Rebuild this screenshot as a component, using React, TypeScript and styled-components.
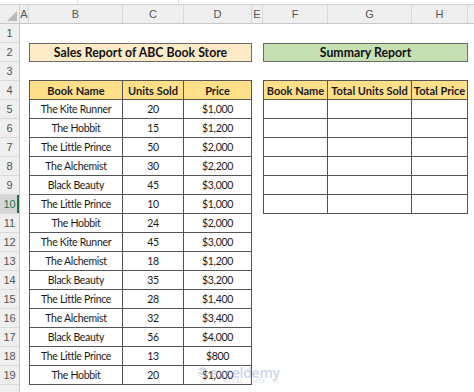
import styled, { createGlobalStyle } from 'styled-components';

// column widths A..I (the row header column is separate)
const COLS = [9, 94, 61, 68, 11, 65, 84, 56, 40];
const LETTERS = ['A', 'B', 'C', 'D', 'E', 'F', 'G', 'H', ''];
const ROW_COUNT = 19;
const SELECTED_ROW = 10;

const sales = [
    ['The Kite Runner', '20', '$1,000'],
    ['The Hobbit', '15', '$1,200'],
    ['The Little Prince', '50', '$2,000'],
    ['The Alchemist', '30', '$2,200'],
    ['Black Beauty', '45', '$3,000'],
    ['The Little Prince', '10', '$1,000'],
    ['The Hobbit', '24', '$2,000'],
    ['The Kite Runner', '45', '$3,000'],
    ['The Alchemist', '18', '$1,200'],
    ['Black Beauty', '35', '$3,200'],
    ['The Little Prince', '28', '$1,400'],
    ['The Alchemist', '32', '$3,400'],
    ['Black Beauty', '56', '$4,000'],
    ['The Little Prince', '13', '$800'],
    ['The Hobbit', '20', '$1,000'],
];

const GlobalStyle = createGlobalStyle`
    html, body {
        margin: 0;
        padding: 0;
        background: #ffffff;
        overflow: hidden;
    }
    body {
        font-family: Lato, "Open Sans", sans-serif;
    }
`;

const Window = styled.div`
    width: 474px;
    height: 392px;
    overflow: hidden;
    position: relative;
    background: #ffffff;
`;

const FormulaStrip = styled.div`
    height: 4px;
    display: flex;
    border-bottom: 1px solid #d6d6d6;
`;

const StripPart = styled.div<{ $w: number }>`
    width: ${p => p.$w}px;
    border-right: 1px solid #dcdcdc;
`;

const HeaderRow = styled.div`
    display: flex;
    height: 19px;
    background: #efefef;
    border-bottom: 1px solid #c8c8c8;
    box-sizing: border-box;
`;

const Corner = styled.div`
    width: 20px;
    flex-shrink: 0;
    position: relative;
    border-right: 1px solid #d0d0d0;
    box-sizing: border-box;
    &::after {
        content: '';
        position: absolute;
        right: 2px;
        bottom: 2px;
        border-style: solid;
        border-width: 0 0 10px 10px;
        border-color: transparent transparent #b9b9b9 transparent;
    }
`;

const ColHead = styled.div<{ $w: number }>`
    width: ${p => p.$w}px;
    flex-shrink: 0;
    box-sizing: border-box;
    border-right: 1px solid #d8d8d8;
    display: flex;
    align-items: center;
    justify-content: center;
    font-family: "Liberation Sans", Arial, sans-serif;
    font-size: 11px;
    color: #555;
`;

const Body = styled.div`
    display: flex;
`;

const RowHeads = styled.div`
    width: 20px;
    flex-shrink: 0;
    display: flex;
    flex-direction: column;
    background: #efefef;
    border-right: 1px solid #c8c8c8;
    box-sizing: border-box;
`;

const RowHead = styled.div<{ $selected?: boolean }>`
    height: 19px;
    box-sizing: border-box;
    border-bottom: 1px solid #dadada;
    display: flex;
    align-items: center;
    justify-content: center;
    font-family: "Liberation Sans", Arial, sans-serif;
    font-size: 11px;
    color: ${p => (p.$selected ? '#217346' : '#555')};
    background: ${p => (p.$selected ? '#d6d6d6' : 'transparent')};
    box-shadow: ${p => (p.$selected ? 'inset -2px 0 0 #217346' : 'none')};
`;

const Sheet = styled.div`
    display: grid;
    grid-template-columns: ${COLS.map(w => `${w}px`).join(' ')};
    grid-auto-rows: 19px;
`;

const Banner = styled.div<{ $bg: string; $col: string }>`
    grid-column: ${p => p.$col};
    grid-row: 2;
    background: ${p => p.$bg};
    border: 1px solid #6b6b6b;
    box-sizing: border-box;
    display: flex;
    align-items: center;
    justify-content: center;
    font-weight: 700;
    font-size: 12.3px;
    color: #111;
`;

const Table = styled.div<{ $col: string; $rows: string; $tpl: string }>`
    grid-column: ${p => p.$col};
    grid-row: ${p => p.$rows};
    display: grid;
    grid-template-columns: ${p => p.$tpl};
    grid-auto-rows: 19px;
    border-top: 1px solid #555;
    border-left: 1px solid #555;
    margin-top: -1px;
`;

const Cell = styled.div<{ $head?: boolean }>`
    box-sizing: border-box;
    border-right: 1px solid #555;
    border-bottom: 1px solid #555;
    display: flex;
    align-items: center;
    justify-content: center;
    white-space: nowrap;
    overflow: hidden;
    font-size: ${p => (p.$head ? '11px' : '10.5px')};
    letter-spacing: ${p => (p.$head ? '0' : '-0.3px')};
    font-weight: ${p => (p.$head ? 700 : 400)};
    background: ${p => (p.$head ? '#ffdf88' : '#ffffff')};
    color: #1a1a1a;
`;

const Watermark = styled.div`
    position: absolute;
    left: 197px;
    top: 366px;
    display: flex;
    align-items: flex-start;
    gap: 2px;
    opacity: 0.45;
    pointer-events: none;
`;

const MarkText = styled.div`
    display: flex;
    flex-direction: column;
    line-height: 1;
`;

const MarkWord = styled.span`
    font-family: "Open Sans", sans-serif;
    font-size: 14px;
    font-weight: 600;
    color: #8ea3d6;
    letter-spacing: -0.3px;
`;

const MarkTag = styled.span`
    font-family: "Liberation Sans", sans-serif;
    font-size: 4.5px;
    color: #9aa6c4;
    letter-spacing: 1px;
    margin-left: 14px;
`;

function App() {
    const rows = Array.from({ length: ROW_COUNT }, (_, i) => i + 1);
    const summaryRows = Array.from({ length: 6 }, (_, i) => i);
    return (
        <Window>
            <GlobalStyle />
            <FormulaStrip>
                <StripPart $w={77} />
                <StripPart $w={100} />
            </FormulaStrip>
            <HeaderRow>
                <Corner />
                {COLS.map((w, i) => (
                    <ColHead key={i} $w={w}>{LETTERS[i]}</ColHead>
                ))}
            </HeaderRow>
            <Body>
                <RowHeads>
                    {rows.map(r => (
                        <RowHead key={r} $selected={r === SELECTED_ROW}>{r}</RowHead>
                    ))}
                    <RowHead />
                </RowHeads>
                <Sheet>
                    <Banner $bg="#fdebc8" $col="2 / 5">Sales Report of ABC Book Store</Banner>
                    <Banner $bg="#c6e0b4" $col="6 / 9">Summary Report</Banner>
                    <Table $col="2 / 5" $rows="4 / 20" $tpl="93px 61px 68px">
                        <Cell $head>Book Name</Cell>
                        <Cell $head>Units Sold</Cell>
                        <Cell $head>Price</Cell>
                        {sales.map((row, i) =>
                            row.map((v, j) => <Cell key={`${i}-${j}`}>{v}</Cell>)
                        )}
                    </Table>
                    <Table $col="6 / 9" $rows="4 / 11" $tpl="64px 84px 56px">
                        <Cell $head>Book Name</Cell>
                        <Cell $head>Total Units Sold</Cell>
                        <Cell $head>Total Price</Cell>
                        {summaryRows.map(i =>
                            [0, 1, 2].map(j => <Cell key={`s${i}-${j}`} />)
                        )}
                    </Table>
                </Sheet>
            </Body>
            <Watermark>
                <svg width="11" height="12" viewBox="0 0 11 12">
                    <path d="M1 3 L5.5 1 L10 3 L5.5 5 Z" fill="#8ea3d6" />
                    <path d="M1 5.5 L5.5 7.5 L10 5.5 L10 7.5 L5.5 9.5 L1 7.5 Z" fill="#a7b6dd" />
                    <path d="M1 8.5 L5.5 10.5 L10 8.5 L10 10 L5.5 12 L1 10 Z" fill="#bdc8e6" />
                </svg>
                <MarkText>
                    <MarkWord>exceldemy</MarkWord>
                    <MarkTag>EXCEL · DATA · BI</MarkTag>
                </MarkText>
            </Watermark>
        </Window>
    );
}

export default App;
